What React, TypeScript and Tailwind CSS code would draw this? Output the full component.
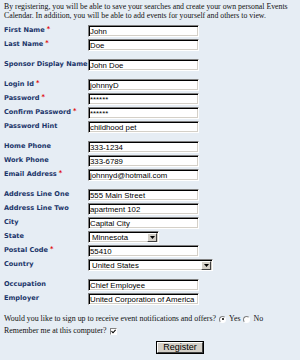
import React from "react";

type Field = { label: string; value?: string; required?: boolean; select?: number };

const groups: Field[][] = [
  [
    { label: "First Name", value: "John", required: true },
    { label: "Last Name", value: "Doe", required: true },
  ],
  [{ label: "Sponsor Display Name", value: "John Doe" }],
  [
    { label: "Login Id", value: "johnnyD", required: true },
    { label: "Password", value: "******", required: true },
    { label: "Confirm Password", value: "******", required: true },
    { label: "Password Hint", value: "childhood pet" },
  ],
  [
    { label: "Home Phone", value: "333-1234" },
    { label: "Work Phone", value: "333-6789" },
    { label: "Email Address", value: "johnnyd@hotmail.com", required: true },
  ],
  [
    { label: "Address Line One", value: "555 Main Street" },
    { label: "Address Line Two", value: "apartment 102" },
    { label: "City", value: "Capital City" },
    { label: "State", value: "Minnesota", select: 71 },
    { label: "Postal Code", value: "55410", required: true },
    { label: "Country", value: "United States", select: 125 },
  ],
  [
    { label: "Occupation", value: "Chief Employee" },
    { label: "Employer", value: "United Corporation of America" },
  ],
];

const inset =
  "border border-t-[#808080] border-l-[#808080] border-r-white border-b-white shadow-[inset_1px_1px_0_#000,inset_-1px_-1px_0_#d4d0c8]";

function FakeSelect({ value, width }: { value: string; width: number }) {
  return (
    <div
      className={`flex h-[12px] items-center bg-white ${inset}`}
      style={{ width }}
    >
      <span className="flex-1 pl-[3px] pt-[1px] font-['Liberation_Sans',Arial,sans-serif] text-[7.8px] leading-none text-black">
        {value}
      </span>
      <span className="mr-[1px] flex h-[9px] w-[10px] items-center justify-center border border-t-white border-l-white border-r-[#404040] border-b-[#404040] bg-[#d4d0c8]">
        <svg width="5" height="3" viewBox="0 0 5 3">
          <path d="M0 0h5L2.5 3z" fill="#000" />
        </svg>
      </span>
    </div>
  );
}

function Row({ f }: { f: Field }) {
  return (
    <div className="grid h-[14px] grid-cols-[84px_1fr] items-center">
      <span className="whitespace-nowrap font-['DejaVu_Sans',Verdana,sans-serif] text-[6.6px] font-bold text-[#1b356a]">
        {f.label}
        {f.required && <span className="relative -top-[1px] ml-[2px] text-[#e00000]">*</span>}
      </span>
      {f.select ? (
        <FakeSelect value={f.value ?? ""} width={f.select} />
      ) : (
        <input
          readOnly
          defaultValue={f.value}
          className={`h-[12px] w-[111px] bg-white px-[1px] font-['Liberation_Sans',Arial,sans-serif] text-[7.8px] leading-none text-black outline-none ${inset}`}
        />
      )}
    </div>
  );
}

function Radio({ checked }: { checked?: boolean }) {
  return (
    <span className="relative inline-flex h-[7px] w-[7px] items-center justify-center rounded-full border border-t-[#808080] border-l-[#808080] border-r-white border-b-white bg-white align-middle">
      {checked && <span className="h-[2px] w-[2px] rounded-full bg-black" />}
    </span>
  );
}

export default function App() {
  return (
    <div className="h-[360px] w-[300px] overflow-hidden bg-[#e6edf4] pl-[4px] pt-[2px] font-['Liberation_Serif','Times_New_Roman',serif] text-[#111]">
      <p className="whitespace-nowrap text-[7.8px] leading-[9px]">
        By registering, you will be able to save your searches and create your own personal Events
        <br />
        Calendar. In addition, you will be able to add events for yourself and others to view.
      </p>

      <div className="mt-[4px] flex flex-col gap-[6px]">
        {groups.map((g, i) => (
          <div key={i} className="flex flex-col">
            {g.map((f) => (
              <Row key={f.label} f={f} />
            ))}
          </div>
        ))}
      </div>

      <div className="mt-[7px] flex h-[12px] items-center gap-[3px] whitespace-nowrap text-[7.9px]">
        <span>Would you like to sign up to receive event notifications and offers?</span>
        <Radio checked />
        <span>Yes</span>
        <Radio />
        <span>No</span>
      </div>
      <div className="flex h-[12px] items-center gap-[3px] whitespace-nowrap text-[7.9px]">
        <span>Remember me at this computer?</span>
        <span className="inline-flex h-[7px] w-[7px] items-center justify-center border border-t-[#808080] border-l-[#808080] border-r-white border-b-white bg-white">
          <svg width="5" height="5" viewBox="0 0 5 5">
            <path d="M0.5 2.2 L2 3.8 L4.6 0.8" fill="none" stroke="#000" strokeWidth="1.1" />
          </svg>
        </span>
      </div>

      <div className="mt-[5px] flex pl-[153px]">
        <button className="h-[11px] w-[46px] border border-t-white border-l-white border-r-[#404040] border-b-[#404040] bg-[#d4d0c8] font-['Liberation_Sans',Arial,sans-serif] text-[9px] leading-none text-black shadow-[0_0_0_1px_#000]">
          Register
        </button>
      </div>
    </div>
  );
}
